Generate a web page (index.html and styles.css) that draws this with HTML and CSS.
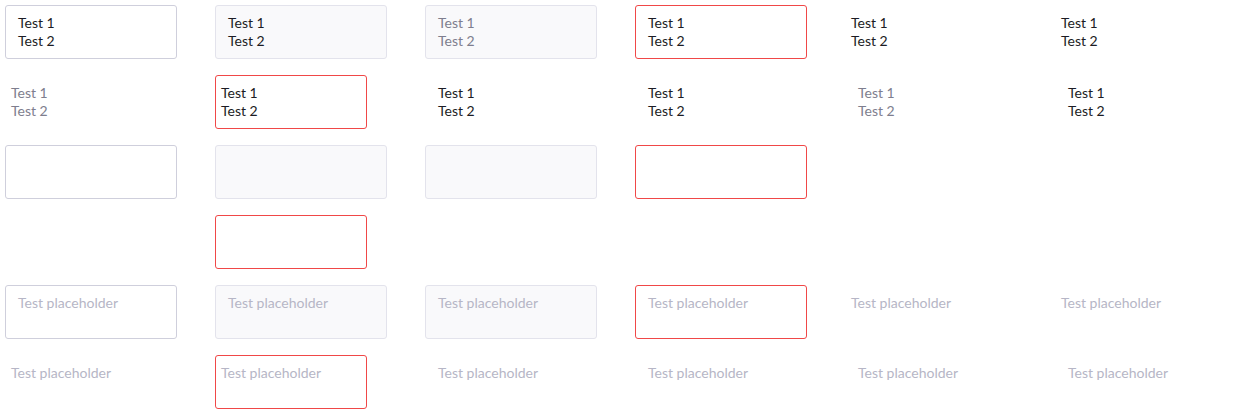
FILE: index.html
```html
<!DOCTYPE html>
<html>
<head>
<meta charset="utf-8">
<link rel="stylesheet" href="styles.css">
</head>
<body>
<div class="grid">
  <div class="ta bordered"><div>Test 1</div><div>Test 2</div></div>
  <div class="ta readonly"><div>Test 1</div><div>Test 2</div></div>
  <div class="ta readonly muted"><div>Test 1</div><div>Test 2</div></div>
  <div class="ta error"><div>Test 1</div><div>Test 2</div></div>
  <div class="ta compact"><div>Test 1</div><div>Test 2</div></div>
  <div class="ta compact"><div>Test 1</div><div>Test 2</div></div>

  <div class="ta compact muted"><div>Test 1</div><div>Test 2</div></div>
  <div class="ta compact error"><div>Test 1</div><div>Test 2</div></div>
  <div class="ta"><div>Test 1</div><div>Test 2</div></div>
  <div class="ta"><div>Test 1</div><div>Test 2</div></div>
  <div class="ta muted"><div>Test 1</div><div>Test 2</div></div>
  <div class="ta"><div>Test 1</div><div>Test 2</div></div>

  <div class="ta bordered"></div>
  <div class="ta readonly"></div>
  <div class="ta readonly"></div>
  <div class="ta error"></div>
  <div class="ta compact"></div>
  <div class="ta compact"></div>

  <div class="ta compact"></div>
  <div class="ta compact error"></div>
  <div class="ta"></div>
  <div class="ta"></div>
  <div class="ta"></div>
  <div class="ta"></div>

  <div class="ta bordered placeholder"><div>Test placeholder</div></div>
  <div class="ta readonly placeholder"><div>Test placeholder</div></div>
  <div class="ta readonly placeholder"><div>Test placeholder</div></div>
  <div class="ta error placeholder"><div>Test placeholder</div></div>
  <div class="ta compact placeholder"><div>Test placeholder</div></div>
  <div class="ta compact placeholder"><div>Test placeholder</div></div>

  <div class="ta compact placeholder"><div>Test placeholder</div></div>
  <div class="ta compact error placeholder"><div>Test placeholder</div></div>
  <div class="ta placeholder"><div>Test placeholder</div></div>
  <div class="ta placeholder"><div>Test placeholder</div></div>
  <div class="ta placeholder"><div>Test placeholder</div></div>
  <div class="ta placeholder"><div>Test placeholder</div></div>
</div>
</body>
</html>
```
FILE: styles.css
```css
html, body {
  margin: 0;
  padding: 0;
  background: #ffffff;
}
body {
  font-family: Lato, "Noto Sans", sans-serif;
  font-size: 14px;
  line-height: 18px;
  color: #1c1c24;
}
.grid {
  display: grid;
  grid-template-columns: repeat(6, 200px);
  grid-auto-rows: 54px;
  column-gap: 10px;
  row-gap: 16px;
  padding: 5px;
}
.ta {
  box-sizing: border-box;
  width: 172px;
  height: 54px;
  padding: 8px 12px;
  border: 1px solid transparent;
  border-radius: 3px;
  background: transparent;
}
.ta.compact {
  width: 152px;
  padding: 8px 5px;
}
.ta.bordered {
  border-color: #cfcfdc;
  background: #ffffff;
}
.ta.readonly {
  border-color: #e3e3ec;
  background: #f9f9fb;
}
.ta.error {
  border-color: #f04848;
  background: #ffffff;
}
.ta.muted {
  color: #7e7e8e;
}
.ta.placeholder {
  color: #b6b6c6;
}
```
